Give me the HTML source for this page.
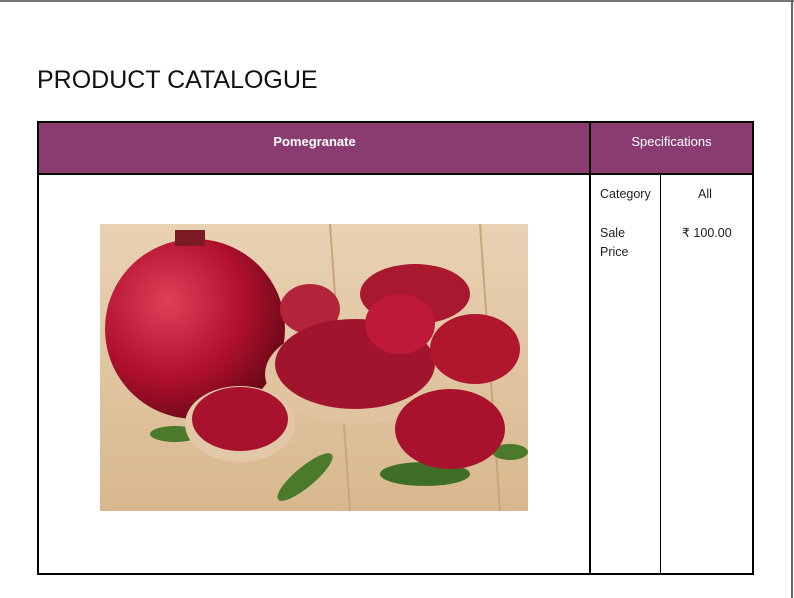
<!DOCTYPE html>
<html><head><style>
body{margin:0;width:794px;height:598px;background:#fff;position:relative;overflow:hidden;font-family:"Liberation Sans",sans-serif}
.tb{position:absolute;left:0;top:0;width:794px;height:2px;background:#777}
.rb{position:absolute;right:1px;top:0;width:2px;height:598px;background:#666}
h1{position:absolute;left:37px;top:66px;margin:0;font-weight:normal;font-size:25px;color:#111;letter-spacing:0}
.b{position:absolute;background:#000}
.hd{position:absolute;background:#8a3c70;color:#fff;font-size:13px}
.t{position:absolute;font-size:12.5px;color:#222;line-height:19px}
</style></head><body>
<div class="tb"></div><div class="rb"></div>
<h1>PRODUCT CATALOGUE</h1>
<div class="hd" style="left:39px;top:123px;width:551px;height:50px"><div style="position:absolute;left:0;right:0;top:11px;text-align:center;font-weight:bold">Pomegranate</div></div>
<div class="hd" style="left:591px;top:123px;width:161px;height:50px"><div style="position:absolute;left:0;right:0;top:11px;text-align:center">Specifications</div></div>
<div class="b" style="left:37px;top:121px;width:717px;height:2px"></div>
<div class="b" style="left:37px;top:173px;width:717px;height:2px"></div>
<div class="b" style="left:37px;top:573px;width:717px;height:2px"></div>
<div class="b" style="left:37px;top:121px;width:2px;height:454px"></div>
<div class="b" style="left:752px;top:121px;width:2px;height:454px"></div>
<div class="b" style="left:589px;top:121px;width:2px;height:454px"></div>
<div class="b" style="left:660px;top:175px;width:1px;height:398px"></div>
<div class="t" style="left:600px;top:185px">Category</div>
<div class="t" style="left:698px;top:185px">All</div>
<div class="t" style="left:600px;top:224px">Sale<br>Price</div>
<div class="t" style="left:682px;top:224px">₹ 100.00</div>
<svg style="position:absolute;left:100px;top:224px" width="428" height="287" viewBox="0 0 428 287">
<defs><linearGradient id="w" x1="0" y1="0" x2="0" y2="1"><stop offset="0" stop-color="#e8d2b4"/><stop offset="1" stop-color="#d8b88e"/></linearGradient>
<radialGradient id="p" cx=".35" cy=".35" r=".7"><stop offset="0" stop-color="#e0405a"/><stop offset=".6" stop-color="#b0102c"/><stop offset="1" stop-color="#6a0818"/></radialGradient></defs>
<rect width="428" height="287" fill="url(#w)"/>
<line x1="230" y1="0" x2="250" y2="287" stroke="#c9a57a" stroke-width="2"/>
<line x1="380" y1="0" x2="400" y2="287" stroke="#c9a57a" stroke-width="2"/>
<ellipse cx="205" cy="253" rx="35" ry="10" fill="#4a7a2a" transform="rotate(-40 205 253)"/>
<ellipse cx="325" cy="250" rx="45" ry="12" fill="#3f6e26"/>
<ellipse cx="75" cy="210" rx="25" ry="8" fill="#4a7a2a"/>
<ellipse cx="410" cy="228" rx="18" ry="8" fill="#4a7a2a"/>
<circle cx="95" cy="105" r="90" fill="url(#p)"/>
<rect x="75" y="6" width="30" height="16" fill="#7a1a22"/>
<ellipse cx="210" cy="85" rx="30" ry="25" fill="#b2243a"/>
<ellipse cx="315" cy="70" rx="55" ry="30" fill="#a8182e"/>
<ellipse cx="255" cy="150" rx="90" ry="50" fill="#e0c4a0"/>
<ellipse cx="255" cy="140" rx="80" ry="45" fill="#a0142e"/>
<ellipse cx="300" cy="100" rx="35" ry="30" fill="#c01838"/>
<ellipse cx="375" cy="125" rx="45" ry="35" fill="#b0162e"/>
<ellipse cx="140" cy="200" rx="55" ry="38" fill="#e2c8a6"/>
<ellipse cx="140" cy="195" rx="48" ry="32" fill="#a8122c"/>
<ellipse cx="350" cy="205" rx="55" ry="40" fill="#a8122c"/>
</svg>
</body></html>
